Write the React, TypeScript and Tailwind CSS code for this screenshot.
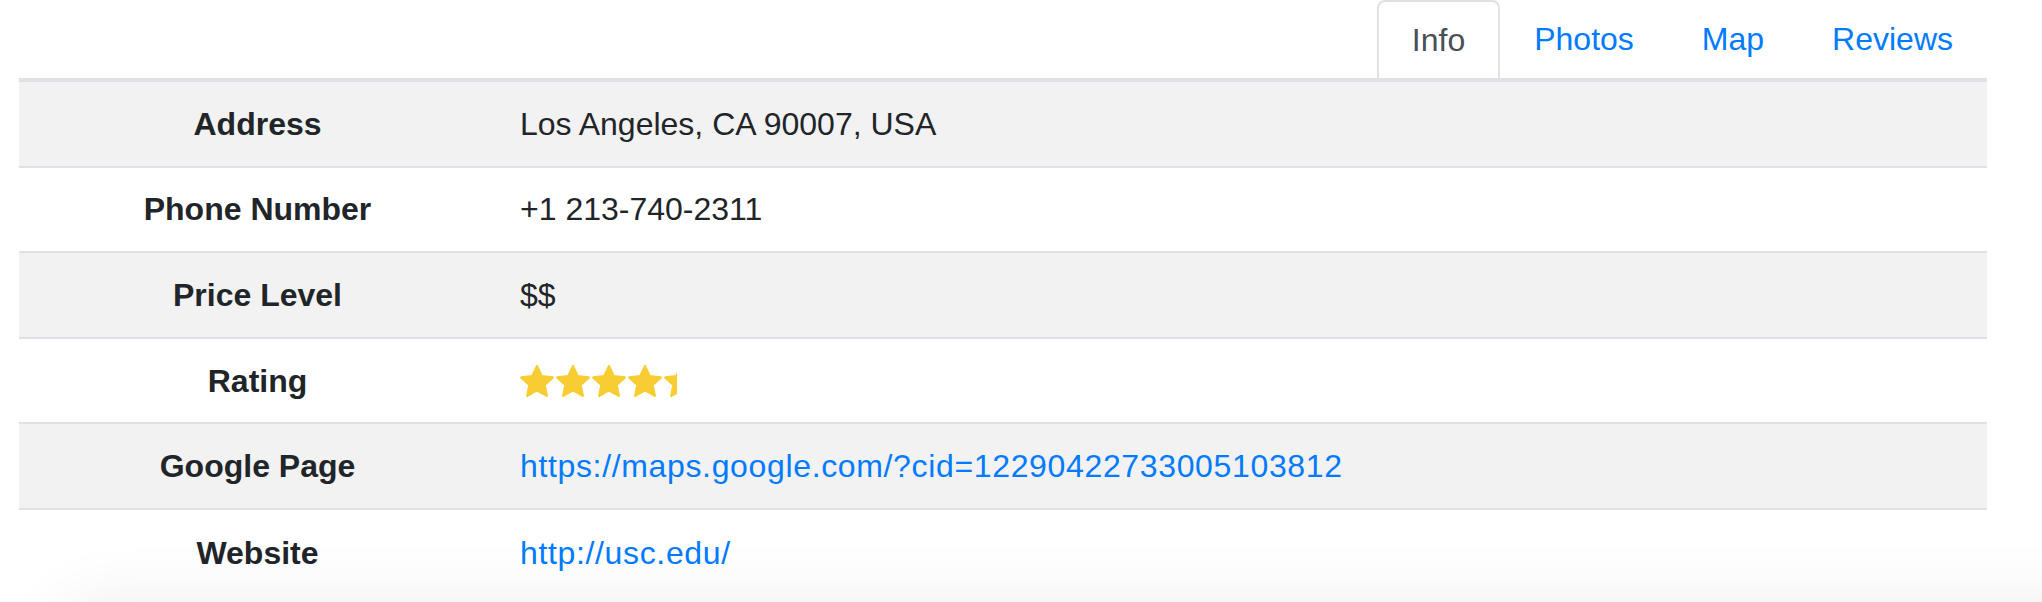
import { Fragment } from 'react';

const rows = [
  { label: 'Address', value: 'Los Angeles, CA 90007, USA' },
  { label: 'Phone Number', value: '+1 213-740-2311' },
  { label: 'Price Level', value: '$$' },
  { label: 'Rating', value: 'stars' },
  { label: 'Google Page', value: 'https://maps.google.com/?cid=12290422733005103812', link: true },
  { label: 'Website', value: 'http://usc.edu/', link: true },
];

const tabs = ['Info', 'Photos', 'Map', 'Reviews'];

function Star() {
  return (
    <svg viewBox="2.2 2.1 19.6 18.6" className="w-[34px] h-[32px] shrink-0">
      <path
        d="M12 2.8l2.75 5.85 6.35.72-4.72 4.33 1.27 6.3L12 16.8 6.35 20l1.27-6.3L2.9 9.37l6.35-.72z"
        fill="#f8cd33"
        stroke="#f8cd33"
        strokeWidth="1.4"
        strokeLinejoin="round"
      />
    </svg>
  );
}

function Stars({ rating }: { rating: number }) {
  return (
    <div className="overflow-hidden" style={{ width: `${rating * 36 - 2}px` }}>
      <div className="flex gap-[2px] w-max">
        {[0, 1, 2, 3, 4].map((i) => (
          <Star key={i} />
        ))}
      </div>
    </div>
  );
}

export default function App() {
  return (
    <div className="relative h-[602px] w-[2042px] overflow-hidden bg-white font-['Liberation_Sans',Arial,sans-serif] text-[32px] text-[#212529]">
      <div className="ml-[19px] w-[1968px]">
        {/* Tabs */}
        <div className="flex justify-end h-[78px]">
          {tabs.map((tab, i) => (
            <div
              key={tab}
              className={
                i === 0
                  ? 'flex items-center px-[33px] border-2 border-b-0 border-[#dee2e6] rounded-t-[8px] text-[#495057] bg-white'
                  : 'flex items-center px-[34px] text-[#007bff]'
              }
            >
              {tab}
            </div>
          ))}
        </div>
        <div className="h-[4px] bg-[#dee2e6]" />

        {/* Details table */}
        <div className="grid grid-cols-[477px_1fr]">
          {rows.map((row, i) => {
            const last = i === rows.length - 1;
            const bg = i % 2 === 0 ? 'bg-[#f2f2f2]' : 'bg-white';
            const border = last ? '' : 'border-b-2 border-[#dee2e6]';
            return (
              <Fragment key={row.label}>
                <div className={`h-[85.6px] flex items-center justify-center font-bold ${border} ${bg}`}>
                  {row.label}
                </div>
                <div className={`h-[85.6px] flex items-center pl-[24px] ${border} ${bg}`}>
                  {row.value === 'stars' ? (
                    <Stars rating={4.42} />
                  ) : row.link ? (
                    <span className="text-[#007bff] tracking-[0.65px]">{row.value}</span>
                  ) : (
                    row.value
                  )}
                </div>
              </Fragment>
            );
          })}
        </div>
      </div>

      {/* shadow of the card below the fold */}
      <div className="absolute top-[625px] left-[70px] right-[-60px] h-[200px] rounded-[40px] shadow-[0_0_70px_24px_rgba(0,0,0,0.07)]" />
    </div>
  );
}
